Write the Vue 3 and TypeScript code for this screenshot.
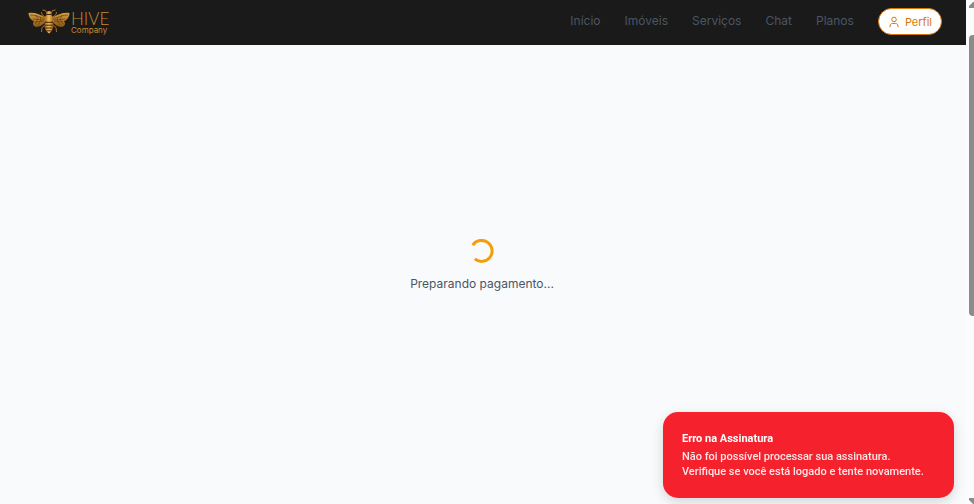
<script setup lang="ts">
interface NavItem {
  label: string
  href: string
}

const navItems: NavItem[] = [
  { label: 'Início', href: '#inicio' },
  { label: 'Imóveis', href: '#imoveis' },
  { label: 'Serviços', href: '#servicos' },
  { label: 'Chat', href: '#chat' },
  { label: 'Planos', href: '#planos' },
]
</script>

<template>
  <div class="shell">
    <div class="page">
      <header class="header">
        <a class="brand" href="#inicio">
          <svg class="bee" viewBox="0 0 42 26" aria-hidden="true">
            <defs>
              <linearGradient id="wing" x1="0" y1="0" x2="0" y2="1">
                <stop offset="0" stop-color="#d9a040" />
                <stop offset="1" stop-color="#8a5416" />
              </linearGradient>
              <linearGradient id="body" x1="0" y1="0" x2="1" y2="0">
                <stop offset="0" stop-color="#a66516" />
                <stop offset="0.5" stop-color="#f0bd58" />
                <stop offset="1" stop-color="#9a5c14" />
              </linearGradient>
            </defs>
            <g fill="none" stroke="#a87024" stroke-width="1">
              <path d="M19 4 17.5 1.5 14.5 1M23 4 24.5 1.5 27.500 1" />
              <path d="M17 8 14 5.500 13.500 3M25 8 28 5.500 28.500 3" />
              <path d="M17 16 14 18.500 13.500 23M25 16 28 18.500 28.500 23" />
            </g>
            <g fill="url(#wing)">
              <path d="M18 9C12 5 6 3 0.500 4 0.500 8 3 11 6 12.500 4 14 5 17 8 18 12 18 16 15 18 12Z" />
              <path d="M24 9C30 5 36 3 41.500 4 41.500 8 39 11 36 12.500 38 14 37 17 34 18 30 18 26 15 24 12Z" />
            </g>
            <g fill="none" stroke="#593711" stroke-width="0.6">
              <path d="M2 6C7 6 12 8 17 10M5 10 16 11M8 6 10 10 7 15M12 8 13 11 10 16M7 13 16 12" />
              <path d="M40 6C35 6 30 8 25 10M37 10 26 11M34 6 32 10 35 15M30 8 29 11 32 16M35 13 26 12" />
            </g>
            <ellipse cx="21" cy="4.500" rx="2.800" ry="2.500" fill="url(#body)" />
            <ellipse cx="21" cy="9.500" rx="4.500" ry="4" fill="url(#body)" />
            <path d="M17 13.500H25C26.500 18 24.500 22 21 24.500 17.500 22 15.500 18 17 13.500Z" fill="url(#body)" />
            <path d="M18.500 5.500H23.500M17 13.300H25M16.500 16.200H25.500M17 19H25M18.500 21.800H23.500" stroke="#4e2c0c" stroke-width="1" />
          </svg>
          <span class="brand-text">
            <span class="brand-name">HIVE</span>
            <span class="brand-sub">Company</span>
          </span>
        </a>
        <nav class="nav">
          <a v-for="item in navItems" :key="item.label" class="nav-link" :href="item.href">{{ item.label }}</a>
          <button class="profile" type="button">
            <svg class="profile-icon" viewBox="0 0 12 12" aria-hidden="true">
              <circle cx="6" cy="3.500" r="2.300" />
              <path d="M2 11.200V10C2 8.300 3 7.500 4.500 7.500H7.500C9 7.500 10 8.300 10 10V11.200" />
            </svg>
            Perfil
          </button>
        </nav>
      </header>

      <main class="main" role="status">
        <svg class="spinner" viewBox="0 0 24 24" aria-hidden="true">
          <path d="M2.800 6.200A10.500 10.500 0 1 1 4.800 19.900" />
        </svg>
        <p class="status">Preparando pagamento...</p>
      </main>
    </div>

    <div class="scrollbar" aria-hidden="true">
      <svg class="arrow" viewBox="0 0 5 6"><path d="M0 6V4L4 0H5V6Z" /></svg>
      <div class="track"><div class="thumb"></div></div>
      <svg class="arrow" viewBox="0 0 5 6"><path d="M0 0H5V6H4L0 2Z" /></svg>
    </div>

    <section class="toast" role="alert">
      <h2 class="toast-title">Erro na Assinatura</h2>
      <p class="toast-text">Não foi possível processar sua assinatura. Verifique se você está logado e tente novamente.</p>
    </section>
  </div>
</template>

<style>
body {
  margin: 0;
  overflow: hidden;
}
</style>

<style scoped>
.shell {
  display: flex;
  height: 100vh;
  background: #fcfcfc;
  font-family: Inter, "Liberation Sans", sans-serif;
}

.page {
  display: flex;
  flex: 1;
  flex-direction: column;
  background: #f9fafc;
}

.header {
  display: flex;
  align-items: center;
  justify-content: space-between;
  box-sizing: border-box;
  height: 45px;
  padding: 0 24px 2px 28px;
  background: #1a1a1a;
}

.brand {
  display: flex;
  align-items: center;
  gap: 1px;
  color: #c58a30;
  text-decoration: none;
}

.bee {
  width: 42px;
  height: 26px;
}

.brand-text {
  display: flex;
  flex-direction: column;
}

.brand-name {
  font-family: Lato, sans-serif;
  font-size: 17px;
  font-weight: 300;
  line-height: 17px;
}

.brand-sub {
  font-size: 8px;
  line-height: 7px;
}

.nav {
  display: flex;
  align-items: center;
  gap: 24px;
}

.nav-link {
  padding-bottom: 2px;
  color: #4b5563;
  font-size: 12px;
  line-height: 18px;
  text-decoration: none;
}

.profile {
  display: flex;
  align-items: center;
  gap: 5px;
  height: 27px;
  padding: 0 9px;
  border: 1px solid #d97706;
  border-radius: 14px;
  background: #fff;
  color: #d97706;
  font-family: inherit;
  font-size: 11px;
  font-weight: 400;
}

.profile-icon {
  width: 12px;
  height: 12px;
  fill: none;
  stroke: currentColor;
  stroke-width: 1;
}

.main {
  display: flex;
  flex: 1;
  flex-direction: column;
  align-items: center;
  justify-content: center;
  gap: 12px;
  padding: 0 2px 18px 0;
}

.spinner {
  width: 24px;
  height: 24px;
  fill: none;
  stroke: #f59e0b;
  stroke-width: 3;
}

.status {
  margin: 0;
  color: #4b5563;
  font-size: 12px;
  line-height: 18px;
}

.scrollbar {
  display: flex;
  flex-direction: column;
  gap: 27px;
  box-sizing: border-box;
  width: 8px;
  padding: 2px 0 0 3px;
}

.arrow {
  width: 5px;
  height: 6px;
  fill: #8b8b8b;
}

.track {
  flex: 1;
}

.thumb {
  height: 64.5%;
  border-radius: 4px 0 0 4px;
  background: #8b8b8b;
}

.toast {
  position: fixed;
  right: 20px;
  bottom: 6px;
  box-sizing: border-box;
  width: 291px;
  padding: 19px;
  border-radius: 15px;
  background: #f5222d;
  box-shadow: 0 4px 12px rgba(0, 0, 0, 0.15);
  color: #fff;
  font-family: Roboto, Inter, sans-serif;
}

.toast-title {
  margin: 0 0 3px;
  font-size: 11px;
  font-weight: 700;
  line-height: 15px;
}

.toast-text {
  margin: 0;
  color: #ffe4e6;
  font-size: 11px;
  font-weight: 500;
  line-height: 15px;
}
</style>
